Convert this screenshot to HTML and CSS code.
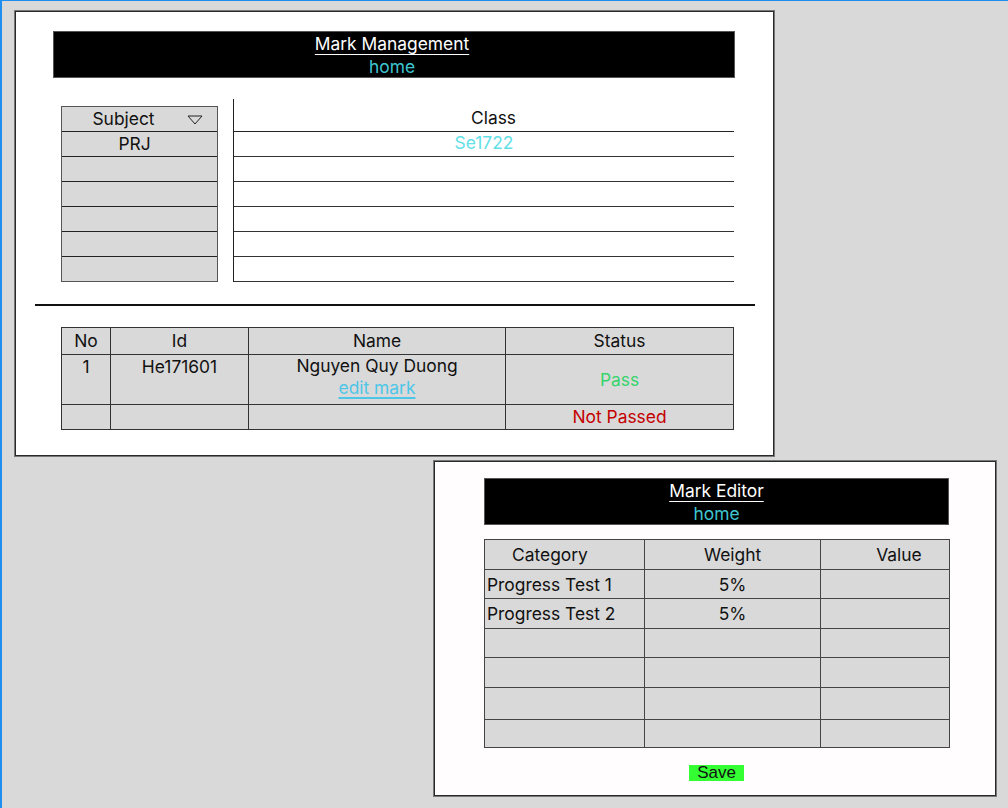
FILE: index.html
```html
<!DOCTYPE html>
<html>
<head>
<meta charset="utf-8">
<link rel="stylesheet" href="styles.css">
</head>
<body>
<div class="desktop">
  <section class="window win-main">
    <header class="bar bar-main">
      <div class="bar-title">Mark Management</div>
      <div class="bar-link">home</div>
    </header>
    <div class="picker">
      <div class="subjects">
        <div class="subj-row subj-head">Subject <span class="caret"><svg width="16" height="10" viewBox="0 0 16 10"><path d="M1 1 L15 1 L8 9 Z" fill="none" stroke="#222" stroke-width="1"/></svg></span></div>
        <div class="subj-row subj-val">PRJ</div>
        <div class="subj-row"></div>
        <div class="subj-row"></div>
        <div class="subj-row"></div>
        <div class="subj-row"></div>
        <div class="subj-row"></div>
      </div>
      <div class="classes">
        <div class="class-head">Class</div>
        <div class="class-row link-light">Se1722</div>
        <div class="class-row"></div>
        <div class="class-row"></div>
        <div class="class-row"></div>
        <div class="class-row"></div>
        <div class="class-row"></div>
      </div>
    </div>
    <hr class="sep">
    <table class="marks">
      <colgroup><col class="c-no"><col class="c-id"><col class="c-name"><col class="c-status"></colgroup>
      <tr class="m-head"><th>No</th><th>Id</th><th>Name</th><th>Status</th></tr>
      <tr class="m-row1">
        <td class="top">1</td>
        <td class="top">He171601</td>
        <td class="top name">Nguyen Quy Duong<br><a class="edit">edit mark</a></td>
        <td class="pass">Pass</td>
      </tr>
      <tr class="m-row2"><td></td><td></td><td></td><td class="fail">Not Passed</td></tr>
    </table>
  </section>

  <section class="window win-editor">
    <header class="bar bar-editor">
      <div class="bar-title">Mark Editor</div>
      <div class="bar-link">home</div>
    </header>
    <table class="editor">
      <colgroup><col class="e-cat"><col class="e-w"><col class="e-v"></colgroup>
      <tr class="e-head"><th class="h-cat">Category</th><th>Weight</th><th class="h-val">Value</th></tr>
      <tr class="r29"><td class="cat">Progress Test 1</td><td class="w">5%</td><td></td></tr>
      <tr class="r30"><td class="cat">Progress Test 2</td><td class="w">5%</td><td></td></tr>
      <tr class="r29"><td></td><td></td><td></td></tr>
      <tr class="r30"><td></td><td></td><td></td></tr>
      <tr class="r32"><td></td><td></td><td></td></tr>
      <tr class="r28"><td></td><td></td><td></td></tr>
    </table>
    <div class="actions"><button class="save">Save</button></div>
  </section>
</div>
</body>
</html>
```

FILE: styles.css
```css
* { box-sizing: border-box; }
html, body { margin: 0; padding: 0; }
body {
  width: 1008px;
  height: 808px;
  background: #d9d9d9;
  border-top: 1px solid #1e8ef0;
  border-left: 2px solid #1e8ef0;
  font-family: Inter, "Noto Sans", sans-serif;
  font-size: 17.4px;
  color: #111;
  overflow: hidden;
}
.desktop { position: relative; width: 100%; height: 100%; }

.window {
  position: absolute;
  border: 1px solid #2a2a2a;
  box-shadow: 0 0 0 1px #777;
}
.win-main {
  left: 13px; top: 10px;
  width: 759px; height: 445px;
  background: #ffffff;
  padding: 19px 0 0 37px;
}
.win-editor {
  left: 432px; top: 460px;
  width: 562px; height: 335px;
  background: #fffdfd;
  padding: 16px 0 0 49px;
}

.bar {
  width: 682px;
  height: 47px;
  background: #000;
  border: 1px solid #555;
  text-align: center;
  line-height: 23px;
  padding-top: 0;
}
.bar-main { padding-right: 4px; }
.bar-editor { width: 465px; }
.bar-title {
  color: #fff;
  text-decoration: underline;
  text-underline-offset: 4px;
  text-decoration-thickness: 1px;
}
.bar-link { color: #3ec6d2; }

.picker {
  display: flex;
  margin-top: 21px;
  height: 183px;
}
.subjects {
  margin: 7px 0 0 8px;
  width: 157px;
  border: 1px solid #555;
  background: #d9d9d9;
}
.subj-row {
  height: 25px;
  line-height: 24px;
  text-align: center;
  border-top: 1px solid #222;
  position: relative;
}
.subj-row:first-child { border-top: none; height: 24px; }
.subj-head { padding-right: 32px; }
.subj-val { padding-right: 10px; }
.caret { position: absolute; right: 14px; top: 8px; line-height: 0; }

.classes {
  margin-left: 15px;
  width: 501px;
  border-left: 1px solid #222;
}
.class-head {
  height: 33px;
  line-height: 38px;
  text-align: center;
  padding-left: 19px;
  border-bottom: 1px solid #222;
}
.class-row {
  height: 25px;
  line-height: 22px;
  text-align: center;
  border-bottom: 1px solid #333;
}
.link-light { color: #63e0e6; }

.sep {
  margin: 22px 0 0 -18px;
  width: 720px;
  height: 2px;
  border: none;
  background: #111;
}

.marks {
  margin: 21px 0 0 8px;
  border-collapse: collapse;
  width: 672px;
  background: #d9d9d9;
  border: 1px solid #777;
  table-layout: fixed;
}
.c-no { width: 49px; }
.c-id { width: 138px; }
.c-name { width: 257px; }
.c-status { width: 228px; }
.marks th, .marks td {
  border: 1px solid #333;
  padding: 0;
  text-align: center;
  font-weight: normal;
}
.m-head th { height: 26px; line-height: 26px; }
.m-row1 td { height: 50px; }
.m-row2 td { height: 25px; line-height: 24px; }
.marks td.top { vertical-align: top; padding-top: 0; line-height: 24px; }
.marks td.name { line-height: 22px; padding-top: 0; }
.edit {
  color: #4dc6e8;
  text-decoration: underline;
  text-decoration-thickness: 2px;
  text-underline-offset: 3px;
}
.pass { color: #36d46c; padding-top: 5px; }
.fail { color: #c40000; padding-top: 2px; }

.editor {
  margin-top: 14px;
  border-collapse: collapse;
  width: 465px;
  table-layout: fixed;
  background: #d9d9d9;
  border: 1px solid #555;
}
.e-cat { width: 160px; }
.e-w { width: 176px; }
.e-v { width: 129px; }
.editor th, .editor td {
  border: 1px solid #444;
  padding: 0;
  font-weight: normal;
  text-align: center;
}
.e-head th { height: 30px; line-height: 28px; }
.h-cat { text-align: left !important; padding-left: 27px !important; }
.h-val { padding-left: 28px !important; }
.r29 td { height: 29px; }
.r30 td { height: 30px; }
.r32 td { height: 32px; }
.r28 td { height: 28px; }
.editor td.cat { text-align: left; padding-left: 2px; }

.actions {
  width: 465px;
  display: flex;
  justify-content: center;
  margin-top: 17px;
}
.save {
  font-family: "Liberation Sans", Arial, sans-serif;
  font-size: 17px;
  background: #33ff33;
  border: none;
  padding: 0;
  width: 55px;
  height: 16px;
  line-height: 16px;
  color: #111;
}
```
